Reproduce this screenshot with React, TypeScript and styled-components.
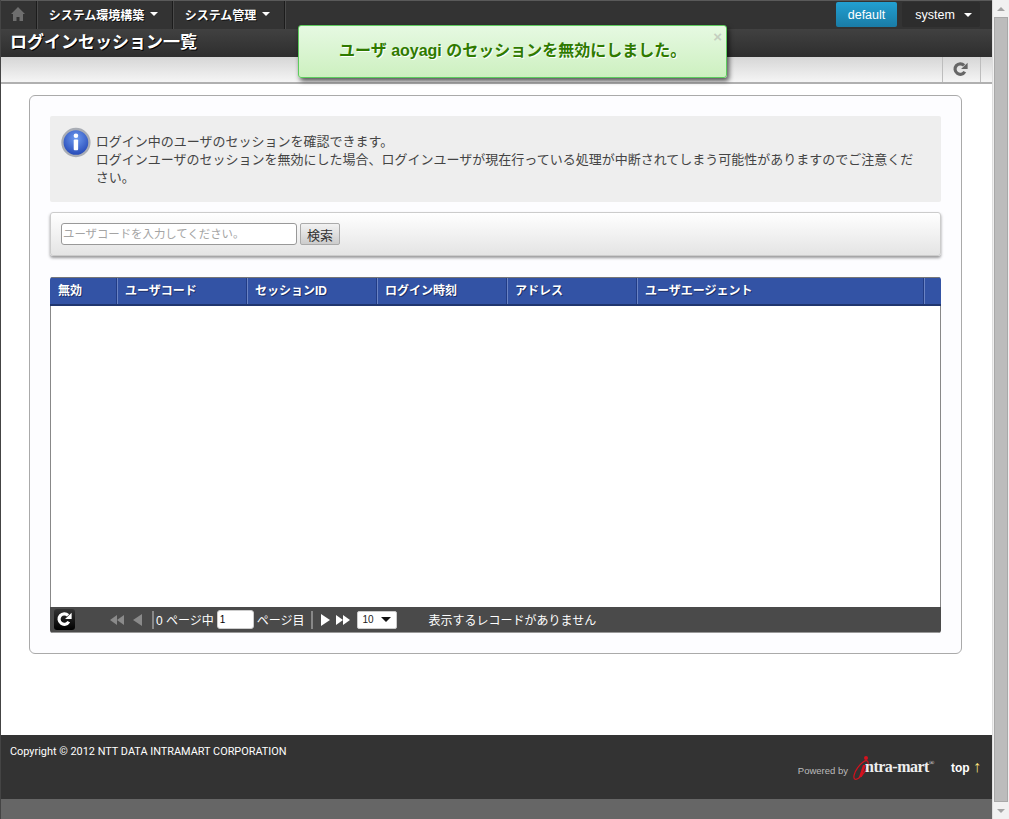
import React from "react";
import styled, { createGlobalStyle } from "styled-components";

const Global = createGlobalStyle`
  html, body { margin: 0; padding: 0; height: 100%; overflow: hidden; background: #fff; }
  * { box-sizing: border-box; }
  body { font-family: "Liberation Sans", "Noto Sans CJK JP", sans-serif; }
`;

const Shell = styled.div`display: flex; width: 1009px; height: 819px; position: relative;`;
const Page = styled.div`width: 992px; height: 819px; display: flex; flex-direction: column; background: #666; border-left: 1px solid #444;`;
const Scrollbar = styled.div`width: 17px; height: 819px; background: #f1f1f1; display: flex; flex-direction: column; align-items: center; border-left: 1px solid #ddd;`;
const ScrollArrow = styled.div<{ $down?: boolean }>`
  height: 17px; width: 100%; display: flex; align-items: center; justify-content: center;
  &::before { content: ""; border-left: 4px solid transparent; border-right: 4px solid transparent;
    ${p => p.$down ? "border-top: 4px solid #a3a3a3;" : "border-bottom: 4px solid #a3a3a3;"} }
`;
const ScrollThumb = styled.div`flex: 1; width: 14px; background: #bcbcbc; border: 1px solid #a8a8a8;`;

const NavBar = styled.div`height: 29px; display: flex; justify-content: space-between; background: #333; border-top: 1px solid #5a5a5a;`;
const NavLeft = styled.div`display: flex;`;
const NavCell = styled.div<{ $w: number }>`
  width: ${p => p.$w}px; display: flex; align-items: center; justify-content: center; gap: 4px; height: 28px;
  border-right: 1px solid #1c1c1c; box-shadow: 1px 0 0 #4a4a4a; padding-right: 2px;
  color: #fff; font-size: 12px; font-weight: bold; text-shadow: 1px 1px 0 #111; padding-bottom: 2px;
`;
const Caret = styled.span<{ $c?: string; $s?: number }>`display: inline-block; border-left: ${p => p.$s ?? 4}px solid transparent; border-right: ${p => p.$s ?? 4}px solid transparent; border-top: ${p => p.$s ?? 4}px solid ${p => p.$c ?? "#fff"}; margin-left: 2px;`;
const NavRight = styled.div`display: flex; align-items: flex-start; padding-top: 1px; padding-right: 12px; gap: 5px;`;
const DefaultBtn = styled.div`width: 61px; height: 25px; border-radius: 2px; background: linear-gradient(#22a0d2, #1a7ca6); color: #fff; font-size: 12.5px; display: flex; align-items: center; justify-content: center;`;
const SystemBtn = styled.div`width: 78px; height: 25px; background: #2d2d2d; border-radius: 2px; color: #fff; font-size: 12.5px; display: flex; align-items: center; justify-content: center; gap: 7px; padding-left: 5px;`;

const TitleBar = styled.div`height: 28px; background: linear-gradient(#414141, #2e2e2e); padding-left: 9px; display: flex; align-items: flex-start;`;
const Title = styled.h1`margin: 4px 0 0; font-size: 17px; line-height: 20px; font-weight: bold; color: #fff; text-shadow: 1px 1px 0 #000;`;

const Toolbar = styled.div`height: 27px; background: linear-gradient(#d6d6d6, #f5f5f5); border-bottom: 2px solid #b0b0b0; display: flex; justify-content: flex-end; padding-right: 11px;`;
const ToolBtn = styled.div`width: 39px; height: 25px; border-left: 1px solid #bdbdbd; border-right: 1px solid #bdbdbd; display: flex; align-items: center; justify-content: center; padding-right: 2px;`;

const Main = styled.main`height: 651px; background: #fff; padding: 11px 29px 0 28px;`;
const Card = styled.section`width: 933px; height: 559px; border: 1px solid #aaa; border-radius: 6px; background: #fdfdff; padding: 20px;`;
const Info = styled.div`height: 86px; background: #eee; border-radius: 2px; display: flex; padding: 11px 20px 0 11px; gap: 5px; margin-bottom: 10px;`;
const InfoText = styled.p`margin: 6px 0 0; font-size: 13px; line-height: 18px; color: #444;`;
const SearchBar = styled.div`height: 44px; border: 1px solid #ccc; border-radius: 3px; background: linear-gradient(#fff, #e4e4e4); box-shadow: 0 2px 3px rgba(0,0,0,.4); display: flex; align-items: center; padding: 0 0 0 10px; gap: 3px; margin-bottom: 21px;`;
const SearchInput = styled.input`
  width: 236px; height: 22px; border: 1px solid #999; border-radius: 3px; background: #fff; padding: 0 1px; font-size: 11.4px; font-family: inherit;
  &::placeholder { color: #a4a4a4; opacity: 1; }
`;
const SearchBtn = styled.button`width: 40px; height: 22px; border: 1px solid #aaa; border-radius: 2px; background: linear-gradient(#f2f2f2, #ccc); font-size: 13px; color: #333; padding: 0; font-family: inherit;`;

const Grid = styled.div`height: 356px; display: flex; flex-direction: column; border-radius: 3px; overflow: hidden;`;
const GridHead = styled.div`height: 29px; flex: none; display: flex; background: #3353a5; border-top: 1px solid #777; border-bottom: 2px solid #20366f;`;
const HeadCell = styled.div<{ $w: number }>`
  width: ${p => p.$w}px; flex: none; padding: 5px 0 0 8px; font-size: 12px; line-height: 16px; font-weight: bold; color: #fff; text-shadow: 1px 1px 0 #1c2f66;
  border-right: 1px solid #223c85; box-shadow: 1px 0 0 #6a83c4;
`;
const HeadFill = styled.div`flex: 1;`;
const GridBody = styled.div`flex: 1; background: #fff; border-left: 1px solid #888; border-right: 1px solid #888;`;
const Pager = styled.div`height: 26px; flex: none; background: #4a4a4a; display: flex; align-items: center; color: #fff; font-size: 12px; padding-left: 4px; border-bottom: 1px solid #999;`;
const ReloadBox = styled.div`width: 21px; height: 21px; border-radius: 3px; background: linear-gradient(#333, #000); display: flex; align-items: center; justify-content: center; margin-right: 35px;`;
const Tri = styled.span<{ $dir: "l" | "r"; $c: string; $size?: number }>`
  display: inline-block; border-top: ${p => p.$size ? 5 : 6}px solid transparent; border-bottom: ${p => p.$size ? 5 : 6}px solid transparent;
  ${p => p.$dir === "l" ? `border-right: ${p.$size ?? 9}px solid ${p.$c};` : `border-left: ${p.$size ?? 9}px solid ${p.$c};`}
`;
const TriGroup = styled.span<{ $ml?: number; $mr?: number }>`display: inline-flex; align-items: center; margin-left: ${p => p.$ml ?? 0}px; margin-right: ${p => p.$mr ?? 6}px;`;
const Sep = styled.span<{ $ml: number }>`width: 2px; height: 18px; background: #888; margin: 0 2px 0 ${p => p.$ml}px;`;
const PageInput = styled.input`width: 37px; height: 19px; border: 1px solid #ccc; border-radius: 3px; margin: 0 3px; padding: 0 2px; font-size: 10px; font-family: inherit; background: #fff;`;
const SizeBox = styled.div`width: 40px; height: 18px; background: #fff; border: 1px solid #ccc; border-radius: 2px; color: #222; font-size: 10px; display: flex; align-items: center; justify-content: space-between; padding: 0 5px; margin-left: 1px;`;
const Records = styled.span`font-size: 12px; margin-left: 32px;`;

const Footer = styled.footer`height: 64px; background: #333; display: flex; justify-content: space-between; padding: 10px 11px 0 9px; color: #fff;`;
const Copy = styled.div`font-size: 10.9px; font-family: Roboto, "Liberation Sans", sans-serif; line-height: 14px;`;
const FootRight = styled.div`display: flex; align-items: center; height: 40px; padding-top: 5px;`;
const Powered = styled.span`font-size: 9.5px; color: #bbb; margin-top: 6px; margin-right: 5px;`;
const Logo = styled.span`position: relative; display: inline-flex; width: 81px; height: 26px; align-items: center;`;
const LogoText = styled.span`font-family: "Liberation Serif", serif; font-weight: bold; font-size: 16px; color: #eee; position: absolute; left: 12px; top: 3px; letter-spacing: -.5px; white-space: nowrap;`;
const LogoMark = styled.sup`font-size: 7px; line-height: 0; vertical-align: 7px; font-weight: normal;`;
const TopLink = styled.span`font-size: 12px; font-weight: bold; margin-left: 17px; white-space: nowrap;`;
const TopArrow = styled.span`color: #ffe680; font-size: 16px; line-height: 12px;`;
const FootFill = styled.div`flex: 1; background: #666;`;

const Toast = styled.div`
  position: absolute; left: 298px; top: 25px; width: 429px; height: 53px; border: 1px solid #5ecb5e; border-radius: 3px;
  background: linear-gradient(#e6f9e2, #cdf0c0); box-shadow: 2px 3px 5px rgba(0,0,0,.65);
  color: #2f7a00; font-size: 16px; font-weight: bold; text-shadow: 1px 1px 0 #fff;
  display: flex; align-items: center; padding: 0 0 5px 40px;
`;
const ToastClose = styled.span`position: absolute; right: 4px; top: 2px; font-size: 15px; color: #c4cfc0; font-weight: bold; text-shadow: none;`;

const Reload = ({ c, s }: { c: string; s: number }) => (
  <svg width={s} height={s} viewBox="0 0 16 16">
    <path d="M12.6 10.4A5.6 5.6 0 1 1 11.8 3.6" fill="none" stroke={c} strokeWidth="3.4" />
    <path d="M8.6 7.4h7V.8z" fill={c} />
  </svg>
);

const Home = () => (
  <svg width="16" height="16" viewBox="0 0 16 16">
    <path d="M8 1 1 8h2v7h3.5v-4h3v4H13V8h2z" fill="#6e6e6e" />
  </svg>
);

const InfoIcon = () => (
  <svg width="31" height="31" viewBox="0 0 31 31">
    <defs>
      <radialGradient id="ig" cx="50%" cy="35%" r="70%">
        <stop offset="0" stopColor="#6f9cf0" /><stop offset="1" stopColor="#1d3fb0" />
      </radialGradient>
    </defs>
    <circle cx="15.5" cy="15.5" r="14" fill="url(#ig)" stroke="#a9adb5" strokeWidth="2.4" />
    <circle cx="15.5" cy="8.5" r="2.4" fill="#fff" />
    <rect x="13.2" y="12.5" width="4.6" height="11" rx="1" fill="#fff" />
  </svg>
);

const heads: [string, number][] = [
  ["無効", 67], ["ユーザコード", 130], ["セッションID", 130], ["ログイン時刻", 130], ["アドレス", 130], ["ユーザエージェント", 287],
];

export default function App() {
  return (
    <Shell>
      <Global />
      <Page>
        <NavBar>
          <NavLeft>
            <NavCell $w={36}><Home /></NavCell>
            <NavCell $w={136}>システム環境構築 <Caret /></NavCell>
            <NavCell $w={112}>システム管理 <Caret /></NavCell>
          </NavLeft>
          <NavRight>
            <DefaultBtn>default</DefaultBtn>
            <SystemBtn>system <Caret /></SystemBtn>
          </NavRight>
        </NavBar>
        <TitleBar><Title>ログインセッション一覧</Title></TitleBar>
        <Toolbar><ToolBtn><Reload c="#666" s={15} /></ToolBtn></Toolbar>
        <Main>
          <Card>
            <Info>
              <InfoIcon />
              <InfoText>
                ログイン中のユーザのセッションを確認できます。<br />
                ログインユーザのセッションを無効にした場合、ログインユーザが現在行っている処理が中断されてしまう可能性がありますのでご注意ください。
              </InfoText>
            </Info>
            <SearchBar>
              <SearchInput placeholder="ユーザコードを入力してください。" />
              <SearchBtn>検索</SearchBtn>
            </SearchBar>
            <Grid>
              <GridHead>
                {heads.map(([t, w]) => <HeadCell key={t} $w={w}>{t}</HeadCell>)}
                <HeadFill />
              </GridHead>
              <GridBody />
              <Pager>
                <ReloadBox><Reload c="#fff" s={15} /></ReloadBox>
                <TriGroup $mr={9}><Tri $dir="l" $c="#8a8a8a" $size={7} /><Tri $dir="l" $c="#8a8a8a" $size={7} /></TriGroup>
                <Tri $dir="l" $c="#8a8a8a" />
                <Sep $ml={10} />
                0 ページ中
                <PageInput defaultValue="1" />
                ページ目
                <Sep $ml={6} />
                <TriGroup $ml={6} $mr={6}><Tri $dir="r" $c="#fff" /></TriGroup>
                <TriGroup><Tri $dir="r" $c="#fff" $size={7} /><Tri $dir="r" $c="#fff" $size={7} /></TriGroup>
                <SizeBox>10 <Caret $c="#111" $s={5} /></SizeBox>
                <Records>表示するレコードがありません</Records>
              </Pager>
            </Grid>
          </Card>
        </Main>
        <Footer>
          <Copy>Copyright © 2012 NTT DATA INTRAMART CORPORATION</Copy>
          <FootRight>
            <Powered>Powered by</Powered>
            <Logo>
              <svg width="22" height="26" viewBox="0 0 22 26">
                <ellipse cx="8" cy="15" rx="4" ry="11" transform="rotate(35 8 15)" fill="none" stroke="#d5121e" strokeWidth="1.2" />
                <path d="M10 10l-4 12h2.8l4-12z" fill="#d5121e" />
                <circle cx="13" cy="3" r="2" fill="#d5121e" />
              </svg>
              <LogoText>ntra-mart<LogoMark>®</LogoMark></LogoText>
            </Logo>
            <TopLink>top <TopArrow>↑</TopArrow></TopLink>
          </FootRight>
        </Footer>
        <FootFill />
      </Page>
      <Scrollbar>
        <ScrollArrow />
        <ScrollThumb />
        <ScrollArrow $down />
      </Scrollbar>
      <Toast>
        ユーザ aoyagi のセッションを無効にしました。
        <ToastClose>×</ToastClose>
      </Toast>
    </Shell>
  );
}
